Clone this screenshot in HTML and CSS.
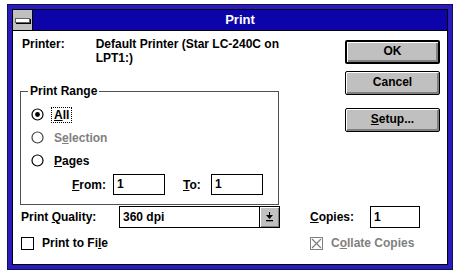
FILE: index.html
```html
<!DOCTYPE html>
<html>
<head>
<meta charset="utf-8">
<link rel="stylesheet" href="styles.css">
</head>
<body>
<div class="window">
  <div class="inner">
    <div class="titlebar">
      <div class="sysmenu"><span class="sysbar"></span></div>
      <div class="title">Print</div>
    </div>
    <div class="client">
      <div class="top">
        <div class="leftcol">
          <div class="printer-row">
            <span class="printer-label">Printer:</span>
            <span class="printer-value">Default Printer (Star LC-240C on<br>LPT1:)</span>
          </div>
          <fieldset class="group">
            <legend class="legend">Print Range</legend>
            <div class="radio-row">
              <svg class="radio" width="13" height="13" viewBox="0 0 13 13"><circle cx="6.5" cy="6.5" r="5.5" fill="#fff" stroke="#000" stroke-width="1.2"/><circle cx="6.5" cy="6.5" r="2.4" fill="#000"/></svg>
              <span class="rlabel focus"><u>A</u>ll</span>
            </div>
            <div class="radio-row">
              <svg class="radio" width="13" height="13" viewBox="0 0 13 13"><circle cx="6.5" cy="6.5" r="5.5" fill="#fff" stroke="#404040" stroke-width="1.2"/></svg>
              <span class="rlabel grey">S<u>e</u>lection</span>
            </div>
            <div class="radio-row">
              <svg class="radio" width="13" height="13" viewBox="0 0 13 13"><circle cx="6.5" cy="6.5" r="5.5" fill="#fff" stroke="#000" stroke-width="1.2"/></svg>
              <span class="rlabel"><u>P</u>ages</span>
            </div>
            <div class="range-row">
              <span class="from-label"><u>F</u>rom:</span>
              <span class="field small">1</span>
              <span class="to-label"><u>T</u>o:</span>
              <span class="field small">1</span>
            </div>
          </fieldset>
        </div>
        <div class="buttons">
          <div class="btn default">OK</div>
          <div class="btn cancel">Cancel</div>
          <div class="btn setup"><u>S</u>etup...</div>
        </div>
      </div>
      <div class="bottom">
        <span class="blabel">Print <u>Q</u>uality:</span>
        <div class="select">
          <span class="select-text">360 dpi</span>
          <span class="select-btn">
            <svg width="9" height="10" viewBox="0 0 9 10"><path d="M4 0h1v3h3L4.5 7 1 3h3z" fill="#000"/><rect x="1" y="8" width="7" height="1.3" fill="#000"/></svg>
          </span>
        </div>
        <span class="spacer"></span>
        <span class="blabel"><u>C</u>opies:</span>
        <span class="field copies">1</span>
        <div class="check-row span3">
          <span class="checkbox"></span>
          <span>Print to Fi<u>l</u>e</span>
        </div>
        <span class="spacer"></span>
        <div class="check-row span2 grey">
          <span class="checkbox grey-box">
            <svg width="11" height="11" viewBox="0 0 11 11"><path d="M1 1L10 10M10 1L1 10" stroke="#808080" stroke-width="1.2"/></svg>
          </span>
          <span>C<u>o</u>llate Copies</span>
        </div>
      </div>
    </div>
  </div>
</div>
</body>
</html>
```

FILE: styles.css
```css
html, body {
  margin: 0;
  padding: 0;
  background: #fff;
}
body {
  font-family: "Liberation Sans", Arial, sans-serif;
  font-weight: bold;
  font-size: 12px;
  color: #000;
}
.window {
  margin: 4px 0 0 7px;
  width: 446px;
  height: 266px;
  box-sizing: border-box;
  border: 1px solid #10105a;
  background: #2a1cbc;
  padding: 4px;
}
.inner {
  box-sizing: border-box;
  height: 100%;
  border: 1px solid #000;
  background: #fff;
  display: flex;
  flex-direction: column;
}
.titlebar {
  height: 20px;
  display: flex;
  background: #0c04a8;
  border-bottom: 1px solid #000;
}
.sysmenu {
  width: 19px;
  height: 20px;
  background: #c0c0c0;
  border-right: 1px solid #000;
  display: flex;
  align-items: center;
  justify-content: center;
}
.sysbar {
  width: 13px;
  height: 3px;
  background: #fff;
  border: 1px solid #606060;
  box-shadow: 1px 1px 0 #000;
}
.title {
  flex: 1;
  color: #fff;
  font-size: 13px;
  line-height: 20px;
  text-align: center;
}
.client {
  flex: 1;
  padding: 6px 0 0 7px;
}
.top {
  display: flex;
  align-items: flex-start;
}
.leftcol {
  width: 259px;
}
.printer-row {
  display: flex;
  line-height: 14px;
  padding-left: 2px;
  white-space: nowrap;
}
.printer-label {
  width: 78px;
}
.group {
  margin: 19px 0 0 0;
  padding: 5px 9px 7px 10px;
  border: 1px solid #505050;
  min-inline-size: 0;
}
.legend {
  padding: 0 2px;
  margin-left: -3px;
  line-height: 14px;
}
.radio-row {
  height: 23px;
  display: flex;
  align-items: center;
}
.radio {
  display: block;
  margin-right: 7px;
}
.rlabel {
  padding: 1px 2px;
  border: 1px solid transparent;
  line-height: 12px;
}
.rlabel.focus {
  border: 1px dotted #000;
}
.grey {
  color: #808080;
}
.range-row {
  height: 25px;
  display: flex;
  align-items: center;
}
.from-label {
  margin-left: 41px;
  width: 41px;
}
.to-label {
  margin-left: 18px;
  width: 28px;
}
.field {
  box-sizing: border-box;
  height: 21px;
  border: 1px solid #000;
  background: #fff;
  padding-left: 3px;
  line-height: 19px;
}
.field.small {
  width: 52px;
}
.buttons {
  margin: 3px 0 0 66px;
  display: flex;
  flex-direction: column;
}
.btn {
  box-sizing: border-box;
  width: 95px;
  height: 24px;
  border: 1px solid #000;
  border-radius: 2px;
  background: #c0c0c0;
  box-shadow: inset 1px 1px 0 #fff, inset -2px -2px 0 #808080;
  text-align: center;
  line-height: 21px;
}
.btn.default {
  border-width: 2px;
  line-height: 19px;
}
.btn.cancel {
  margin-top: 7px;
}
.btn.setup {
  margin-top: 13px;
}
.bottom {
  margin-top: 1px;
  display: grid;
  grid-template-columns: 98px 161px 30px 60px 50px;
  grid-template-rows: 22px 20px;
  row-gap: 5px;
  align-items: center;
  padding-left: 1px;
}
.spacer {
  display: block;
}
.select {
  box-sizing: border-box;
  height: 22px;
  border: 1px solid #000;
  display: flex;
  background: #fff;
}
.select-text {
  flex: 1;
  padding-left: 3px;
  line-height: 20px;
}
.select-btn {
  width: 19px;
  background: #c0c0c0;
  border-left: 1px solid #000;
  box-shadow: inset 1px 1px 0 #fff, inset -1px -1px 0 #808080;
  display: flex;
  align-items: center;
  justify-content: center;
}
.select-btn svg {
  display: block;
}
.copies {
  height: 22px;
  line-height: 20px;
}
.check-row {
  display: flex;
  align-items: center;
}
.span3 {
  grid-column: 1 / span 2;
}
.span2 {
  grid-column: 4 / span 2;
  white-space: nowrap;
}
.checkbox {
  box-sizing: border-box;
  width: 13px;
  height: 13px;
  border: 1px solid #000;
  background: #fff;
  margin-right: 8px;
  display: flex;
  align-items: center;
  justify-content: center;
}
.checkbox svg {
  display: block;
}
.grey-box {
  border-color: #808080;
}
```
